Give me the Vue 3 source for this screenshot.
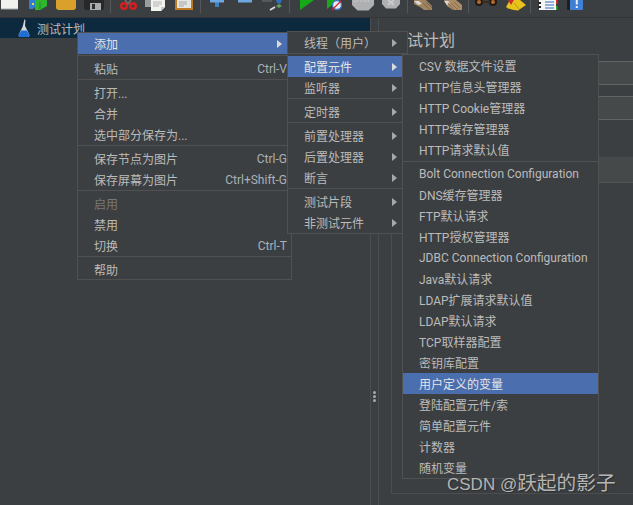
<template>
  <div class="app">
    <div class="toolbar">
      <!-- new -->
      <span class="tool"><svg viewBox="0 0 28 17"><path d="M5 0h17v9H5z" fill="#f1f1ee"/><path d="M5 9h17" stroke="#aaa"/></svg></span>
      <!-- templates -->
      <span class="tool"><svg viewBox="0 0 28 17"><path d="M5 0h6v7l-2 2H5z" fill="#2f7fd0"/><path d="M11 0h12v6l-7 4h-5z" fill="#2fb52f"/><path d="M8 3h2v2H8z" fill="#e8d44a"/><path d="M16 2v7" stroke="#1a8a1a"/></svg></span>
      <!-- open -->
      <span class="tool"><svg viewBox="0 0 28 17"><path d="M4 0h20v7q0 3-3 3H7Q4 10 4 7z" fill="#d9a02c"/></svg></span>
      <!-- save -->
      <span class="tool"><svg viewBox="0 0 28 17"><path d="M4 0h20v8q0 2-2 2H6Q4 10 4 8z" fill="#26282a"/><path d="M10 3h11v7H10z" fill="#a9abac"/><path d="M12 4h3v5h-3z" fill="#2c2e30"/></svg></span>
      <span class="sep"></span>
      <!-- cut -->
      <span class="tool"><svg viewBox="0 0 28 17"><path d="M11 0l3 4 3-4" stroke="#6f6f6f" stroke-width="1.500" fill="none"/><g fill="none" stroke="#d81e1e" stroke-width="2.400"><circle cx="10" cy="6" r="2.800"/><circle cx="19" cy="6" r="2.800"/></g></svg></span>
      <!-- copy -->
      <span class="tool"><svg viewBox="0 0 28 17"><path d="M3 0h14v7H3z" fill="#9a9c9d"/><path d="M9 0h14v7l-4 4H9z" fill="#f2f2ef"/><path d="M11 2h9M11 4h9M11 6h6" stroke="#b5b5b5"/><path d="M19 11v-4h4z" fill="#c9c9c6"/></svg></span>
      <!-- paste -->
      <span class="tool"><svg viewBox="0 0 28 17"><path d="M5 0h18v10H5z" fill="#bd7a23"/><path d="M7 0h14v8H7z" fill="#e5e5e2"/><path d="M9 2h8M9 4h8M9 6h5" stroke="#a8a8a8"/></svg></span>
      <span class="sep"></span>
      <!-- expand -->
      <span class="tool"><svg viewBox="0 0 28 17"><path d="M7 0h14v2.500h-5V7h-4V2.500H7z" fill="#6fa8e0"/><path d="M12 2.500h4V7h-4z" fill="#3f7fc4"/></svg></span>
      <!-- collapse -->
      <span class="tool"><svg viewBox="0 0 28 17"><path d="M7 0h14v2.500H7z" fill="#6fa8e0"/></svg></span>
      <!-- toggle -->
      <span class="tool"><svg viewBox="0 0 28 17"><path d="M3 0h10v2H3z" fill="#55595c"/><path d="M17 0h6l-2 4-3-1z" fill="#2f6fc0"/><path d="M20 4l3 2-3 2-3-2z" fill="#5fa05f"/><path d="M16 7l-5 3" stroke="#d8d8d8" stroke-width="2"/></svg></span>
      <span class="sep"></span>
      <!-- start -->
      <span class="tool"><svg viewBox="0 0 28 17"><path d="M7 0h14l-14 10z" fill="#17a817"/></svg></span>
      <!-- start no timers -->
      <span class="tool"><svg viewBox="0 0 28 17"><path d="M6 0h12L6 9z" fill="#17a817"/><circle cx="16" cy="5" r="4.500" fill="#e9eef5" stroke="#3b77c9" stroke-width="1.400"/><path d="M11 10l9-9" stroke="#d92323" stroke-width="1.300"/></svg></span>
      <!-- stop -->
      <span class="tool"><svg viewBox="0 0 28 17"><path d="M3 0h22v5l-5.500 5.500h-11L3 5z" fill="#aeb0b1"/><text x="14" y="2" class="stop-txt" text-anchor="middle">STOP</text></svg></span>
      <!-- shutdown -->
      <span class="tool"><svg viewBox="0 0 28 17"><path d="M5 0h18v4l-4 4.500H9L5 4z" fill="#aeb0b1"/><path d="M11 0l6 5" stroke="#c9cbcc" stroke-width="2"/><path d="M17 0l-6 5" stroke="#c9cbcc" stroke-width="2"/></svg></span>
      <span class="sep"></span>
      <!-- clear -->
      <span class="tool"><svg viewBox="0 0 28 17"><path d="M4 0h8l4 0 6 6v4h-8L10 7 4 4z" fill="#a08461"/><path d="M4 1h5l3 3-4 1z" fill="#d7d8d4"/><path d="M13 3l7 7M16 2l6 6" stroke="#7d6446"/></svg></span>
      <span class="tool"><svg viewBox="0 0 28 17"><path d="M6 0h12l6 5v5h-9L9 6z" fill="#ab8c66"/><path d="M6 1h4l2 2-3 2z" fill="#d7d8d4"/><path d="M13 3l7 7M16 2l6 6M10 3l6 7" stroke="#8a7050"/></svg></span>
      <span class="sep"></span>
      <!-- search -->
      <span class="tool"><svg viewBox="0 0 28 17"><circle cx="7" cy="2" r="4" fill="#1f1a16"/><circle cx="21" cy="2" r="4" fill="#1f1a16"/><circle cx="7" cy="2" r="2" fill="#b86a2a"/><circle cx="21" cy="2" r="2" fill="#b86a2a"/><path d="M10 1h8v2h-8z" fill="#3a2a1c"/></svg></span>
      <!-- reset search -->
      <span class="tool"><svg viewBox="0 0 28 17"><path d="M10 0h10l6 5-8 5.500Q10 10 6 7z" fill="#e8c31c"/><path d="M8 0h6l-3 5z" fill="#d22d2d"/><path d="M14 3l5 6" stroke="#b99512"/></svg></span>
      <span class="sep"></span>
      <!-- function helper -->
      <span class="tool"><svg viewBox="0 0 28 17"><path d="M6 0h17v10H6z" fill="#f4f4f4"/><path d="M12 2h9M12 5h9M12 8h9" stroke="#2f6fc0"/><path d="M5 2h3v2H5zM5 6h3v2H5z" fill="#222"/><path d="M23 0h1.500v4H23z" fill="#c33"/><path d="M23 6h1.500v4H23z" fill="#2a2"/></svg></span>
      <!-- help -->
      <span class="tool"><svg viewBox="0 0 28 17"><path d="M6 0h3v10H6z" fill="#1c1e22"/><path d="M9 0h13v9q0 1-1 1H9z" fill="#3f7fd4"/><path d="M14.800 0h2v4.500h-2zM14.800 6h2v2h-2z" fill="#e8f0fb"/></svg></span>
    </div>

    <div class="main">
      <div class="left-pane">
        <div class="tree-row">
          <svg class="flask" viewBox="0 0 16 20"><path d="M8 0l1 1-.5 6L13 16q1 3-2 3H4q-3 0-2-3L6 8z" fill="#d4d8dc"/><path d="M4.500 12h6l2.500 4q.5 3-2 3H4q-3 0-2-3z" fill="#1f6fd6"/></svg>
          <span>测试计划</span>
        </div>
      </div>
      <div class="splitter">
        <span class="grip"></span><span class="grip"></span><span class="grip"></span>
      </div>
      <div class="right-pane">
        <div class="plan-title">测试计划</div>
        <div class="field"></div>
        <div class="field second"></div>
        <div class="field third"></div>
        <div class="panel"></div>
      </div>
    </div>

    <div class="menu menu-main">
      <template v-for="(item, i) in mainItems" :key="i">
        <div v-if="item.sep" class="menu-sep"></div>
        <div v-else class="menu-item" :class="{ active: item.active, disabled: item.disabled }">
          <span class="label">{{ item.label }}</span>
          <span v-if="item.key" class="key">{{ item.key }}</span>
          <span v-if="item.sub" class="arrow"></span>
        </div>
      </template>
    </div>

    <div class="menu menu-add">
      <template v-for="(item, i) in addItems" :key="i">
        <div v-if="item.sep" class="menu-sep"></div>
        <div v-else class="menu-item" :class="{ active: item.active }">
          <span class="label">{{ item.label }}</span>
          <span class="arrow"></span>
        </div>
      </template>
    </div>

    <div class="menu menu-config">
      <template v-for="(item, i) in configItems" :key="i">
        <div v-if="item.sep" class="menu-sep"></div>
        <div v-else class="menu-item" :class="{ active: item.active }">
          <span class="label">{{ item.label }}</span>
        </div>
      </template>
    </div>

    <div class="watermark">CSDN @<span class="wm-name">跃起的影子</span></div>
  </div>
</template>

<script setup>
const sep = { sep: true }

const mainItems = [
  { label: '添加', sub: true, active: true },
  sep,
  { label: '粘贴', key: 'Ctrl-V' },
  sep,
  { label: '打开...' },
  { label: '合并' },
  { label: '选中部分保存为...' },
  sep,
  { label: '保存节点为图片', key: 'Ctrl-G' },
  { label: '保存屏幕为图片', key: 'Ctrl+Shift-G' },
  sep,
  { label: '启用', disabled: true },
  { label: '禁用' },
  { label: '切换', key: 'Ctrl-T' },
  sep,
  { label: '帮助' }
]

const addItems = [
  { label: '线程（用户）' },
  sep,
  { label: '配置元件', active: true },
  { label: '监听器' },
  sep,
  { label: '定时器' },
  sep,
  { label: '前置处理器' },
  { label: '后置处理器' },
  { label: '断言' },
  sep,
  { label: '测试片段' },
  { label: '非测试元件' }
]

const configItems = [
  { label: 'CSV 数据文件设置' },
  { label: 'HTTP信息头管理器' },
  { label: 'HTTP Cookie管理器' },
  { label: 'HTTP缓存管理器' },
  { label: 'HTTP请求默认值' },
  sep,
  { label: 'Bolt Connection Configuration' },
  { label: 'DNS缓存管理器' },
  { label: 'FTP默认请求' },
  { label: 'HTTP授权管理器' },
  { label: 'JDBC Connection Configuration' },
  { label: 'Java默认请求' },
  { label: 'LDAP扩展请求默认值' },
  { label: 'LDAP默认请求' },
  { label: 'TCP取样器配置' },
  { label: '密钥库配置' },
  { label: '用户定义的变量', active: true },
  { label: '登陆配置元件/索' },
  { label: '简单配置元件' },
  { label: '计数器' },
  { label: '随机变量' }
]
</script>

<style>
html, body {
  margin: 0;
  background: #3c3f41;
}
</style>

<style scoped>
.app {
  position: relative;
  width: 633px;
  height: 505px;
  overflow: hidden;
  display: flex;
  flex-direction: column;
  background: #3c3f41;
  color: #bbbbbb;
  font-family: Roboto, "Noto Sans CJK SC", sans-serif;
  font-size: 12px;
}

.toolbar {
  height: 17px;
  flex-shrink: 0;
  display: flex;
  margin-left: -4px;
  border-bottom: 1px solid #323436;
}

.tool {
  width: 28px;
  height: 17px;
  flex-shrink: 0;
}

.tool svg {
  display: block;
  width: 28px;
  height: 17px;
}

.stop-txt {
  font-family: "Liberation Sans", sans-serif;
  font-size: 7px;
  font-weight: bold;
  fill: #c4c6c7;
}

.sep {
  width: 5.5px;
  height: 13px;
  flex-shrink: 0;
  background: linear-gradient(#555759, #555759) center / 1px 100% no-repeat;
}

.main {
  flex: 1;
  display: flex;
  min-height: 0;
}

.left-pane {
  width: 370px;
  flex-shrink: 0;
}

.tree-row {
  height: 20px;
  display: flex;
  align-items: center;
  gap: 5px;
  padding-left: 17px;
  background: #0d293e;
}

.flask {
  width: 15px;
  height: 19px;
}

.splitter {
  width: 9px;
  flex-shrink: 0;
  display: flex;
  flex-direction: column;
  align-items: center;
  justify-content: center;
  gap: 1px;
  padding-top: 270px;
  box-sizing: border-box;
  border-left: 1px solid #4b4d4f;
  border-right: 1px solid #4b4d4f;
}

.grip {
  width: 3px;
  height: 3px;
  border-radius: 50%;
  background: #a8a8a8;
}

.right-pane {
  flex: 1;
  min-width: 0;
  padding: 13px 0 11px 12px;
  display: flex;
  flex-direction: column;
}

.plan-title {
  font-size: 16px;
  line-height: 20px;
  height: 20px;
}

.field {
  height: 22px;
  margin-top: 10px;
  border-top: 1px solid #646464;
  border-bottom: 1px solid #646464;
  background: #45494a;
}

.field.second {
  margin-top: 11px;
}

.field.third {
  height: 25px;
  margin-top: 37px;
  border-top: 0;
  border-bottom: 1px solid #555;
}

.panel {
  flex: 1;
  border-left: 1px solid #4b4d4f;
  border-bottom: 1px solid #4b4d4f;
}

.menu {
  position: absolute;
  box-sizing: border-box;
  overflow: hidden;
  background: #3c3f41;
  border: 1px solid #515151;
}

.menu-main {
  left: 77px;
  top: 32px;
  width: 215px;
  height: 248px;
}

.menu-add {
  left: 287px;
  top: 31px;
  width: 121px;
  height: 203px;
}

.menu-config {
  left: 402px;
  top: 54px;
  width: 197px;
  height: 425px;
}

.menu-item {
  height: 21px;
  display: flex;
  align-items: center;
  white-space: nowrap;
}

.menu-main .menu-item {
  padding: 0 4px 0 16px;
}

.menu-add .menu-item {
  padding: 0 5px 0 16px;
}

.menu-config .menu-item {
  padding: 0 8px 0 16px;
}

.menu-item.active {
  background: #4b6eaf;
  color: #e4e4e4;
}

.menu-item.disabled {
  color: #777777;
}

.label {
  flex: 1;
}

.key {
  color: #a9b2b8;
}

.arrow {
  width: 0;
  height: 0;
  margin-right: 5px;
  border-left: 5px solid #a8a8a8;
  border-top: 4.500px solid transparent;
  border-bottom: 4.500px solid transparent;
}

.menu-item.active .arrow {
  border-left-color: #dcdcdc;
}

.menu-sep {
  height: 3px;
  box-sizing: border-box;
  border-top: 1px solid #515151;
}

/* first separator under the highlighted row sits one pixel lower */
.menu-main .menu-item.active + .menu-sep {
  margin-top: 1px;
}

.menu-config .menu-sep {
  height: 2px;
  margin-top: 1px;
}

.watermark {
  position: absolute;
  left: 447px;
  top: 470px;
  font-family: "Liberation Sans", "Noto Sans CJK SC", sans-serif;
  font-size: 17px;
  line-height: 26px;
  color: rgba(205, 205, 205, 0.85);
  text-shadow: 1px 1px 1px rgba(40, 40, 40, 0.7);
  white-space: nowrap;
}

.wm-name {
  font-size: 19.700px;
}
</style>
